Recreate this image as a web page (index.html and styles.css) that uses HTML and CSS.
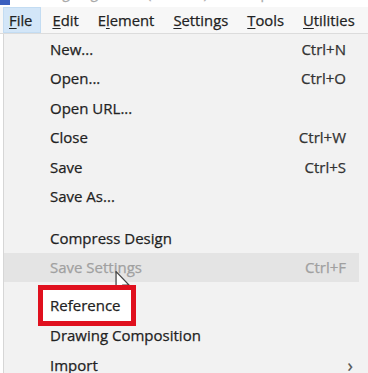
FILE: index.html
```html
<!doctype html>
<html>
<head>
	<meta charset="utf-8">
	<title>File menu</title>
	<link rel="stylesheet" href="styles.css">
</head>
<body>
	<div class="titlebar">
		<span class="app-icon"></span>
		<span class="title">Designing Studio (Untitled) - Workspace</span>
	</div>
	<div class="menubar">
		<span class="menu active"><u>F</u>ile</span>
		<span class="menu"><u>E</u>dit</span>
		<span class="menu">E<u>l</u>ement</span>
		<span class="menu"><u>S</u>ettings</span>
		<span class="menu"><u>T</u>ools</span>
		<span class="menu"><u>U</u>tilities</span>
	</div>
	<div class="dropdown">
		<div class="item"><span>New...</span><span class="key">Ctrl+N</span></div>
		<div class="item"><span>Open...</span><span class="key">Ctrl+O</span></div>
		<div class="item"><span>Open URL...</span></div>
		<div class="item"><span>Close</span><span class="key">Ctrl+W</span></div>
		<div class="item"><span>Save</span><span class="key">Ctrl+S</span></div>
		<div class="item"><span>Save As...</span></div>
		<div class="sep"></div>
		<div class="item"><span>Compress Design</span></div>
		<div class="item disabled hover"><span>Save Settings</span><span class="key">Ctrl+F</span></div>
		<div class="sep small"></div>
		<div class="item"><span class="callout">Reference</span></div>
		<div class="item"><span>Drawing Composition</span></div>
		<div class="item"><span>Import</span><span class="arrow">&#8250;</span></div>
		<svg class="cursor" width="16" height="24" viewBox="0 0 12 19">
			<path d="M0.5 0.5 L0.5 15.5 L4 12 L6.5 18 L8.5 17 L6 11.2 L10.8 11.2 Z" fill="#fff" stroke="#444" stroke-width="1"/>
		</svg>
	</div>
</body>
</html>
```

FILE: styles.css
```css
body {
	margin: 0;
	background: #fff;
	font-family: "Open Sans", "Noto Sans", sans-serif;
	color: #222;
	overflow: hidden;
	height: 373px;
	-webkit-text-stroke: 0.25px currentColor;
}

.titlebar {
	height: 7px;
	overflow: hidden;
	display: flex;
	align-items: flex-end;
	gap: 24px;
}
.app-icon {
	width: 10px;
	height: 5px;
	margin-bottom: 2px;
	background: #3a5fbf;
	flex: none;
}
.title {
	font-size: 14px;
	line-height: 14px;
	color: #aaa;
	white-space: nowrap;
	margin-bottom: 7px;
}

.menubar {
	display: flex;
	gap: 3px;
	height: 26px;
	padding-left: 3px;
	background: #f7f7f7;
	border-bottom: 1px solid #dcdcdc;
	font-size: 14.8px;
}
.menu {
	padding: 0 7px;
	line-height: 24px;
	border: 1px solid transparent;
}
.menu.active {
	background: #d3e6f8;
	border-color: #c3dcf2;
	padding: 0 8px 0 5px;
}
.menu u {
	text-decoration-thickness: 1px;
	text-underline-offset: 2px;
}

.dropdown {
	position: relative;
	margin-left: 3px;
	border-left: 1px solid #d6d6d6;
	background: #f2f2f2;
	font-size: 15px;
	height: 340px;
}
.item {
	display: flex;
	align-items: center;
	justify-content: space-between;
	height: 29.5px;
	padding: 0 22px 0 46px;
	white-space: nowrap;
}
.item .key {
	color: #333;
}
.item.hover {
	background: #e4e4e4;
	margin-right: 9px;
	padding-right: 13px;
}
.item.disabled,
.item.disabled .key {
	color: #a0a0a0;
}
.sep {
	height: 12px;
}
.sep.small {
	height: 9px;
}
.arrow {
	font-size: 18px;
	color: #555;
	margin-right: -7px;
}

.callout {
	position: relative;
	z-index: 2;
	display: inline-block;
	margin: -6px 0 -6px -12px;
	padding: 0 10px 0 7px;
	line-height: 31px;
	border: 5px solid #e0101e;
	background: #fff;
}

.cursor {
	position: absolute;
	left: 111px;
	top: 237px;
	z-index: 1;
	-webkit-text-stroke: 0;
}
```
